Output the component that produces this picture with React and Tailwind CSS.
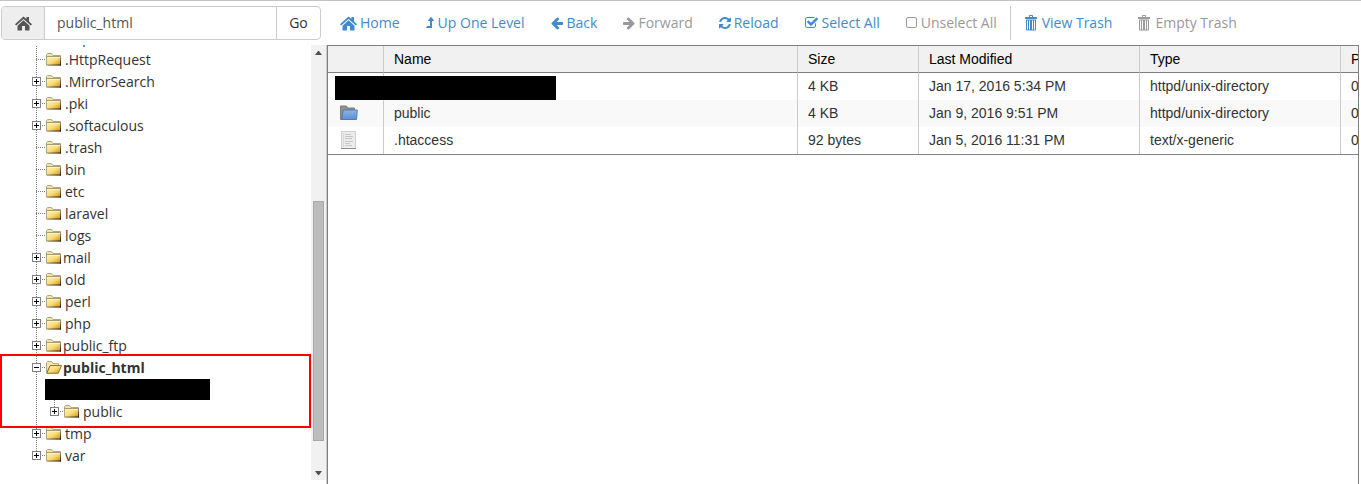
const BLUE = "text-[#428bca]";
const GRAY = "text-[#999999]";

function Icon({ className, viewBox, children }) {
  return (
    <svg
      className={"shrink-0 fill-current " + className}
      viewBox={viewBox}
      preserveAspectRatio="xMinYMid meet"
      aria-hidden="true"
    >
      {children}
    </svg>
  );
}

const HomeIcon = () => (
  <Icon className="h-[15px] w-[17px]" viewBox="0 0 17 15">
    <path d="M8.5 .4 11.400 3.100V1H14V5.500L17 8.300 15.800 9.600 8.500 3.100 1.200 9.600 0 8.300Z" />
    <path d="M8.500 4.300 14.500 9.700V14.500H10V10H7V14.500H2.500V9.700Z" />
  </Icon>
);
const LevelUpIcon = () => (
  <Icon className="h-[14px] w-[9px]" viewBox="0 0 1024 1792">
    <path
      transform="matrix(1 0 0 -1 0 1536)"
      d="M1018 933q-18 -37 -58 -37h-192v-864q0 -14 -9 -23t-23 -9h-704q-21 0 -29 18q-8 20 4 35l160 192q9 11 25 11h320v640h-192q-40 0 -58 37q-17 37 9 68l320 384q18 22 49 22t49 -22l320 -384q27 -32 9 -68z"
    />
  </Icon>
);
const ArrowLeftIcon = () => (
  <Icon className="h-[14px] w-[13px]" viewBox="0 0 1536 1792">
    <path d="M1536 896v128q0 53-32.500 90.500t-84.500 37.500h-704l293 294q38 36 38 90t-38 90l-75 76q-37 37-90 37-52 0-91-37l-651-652q-37-37-37-90 0-52 37-91l651-650q38-38 91-38 52 0 90 38l75 74q38 38 38 91t-38 91l-293 293h704q52 0 84.500 37.500t32.500 90.500z" />
  </Icon>
);
const ArrowRightIcon = () => (
  <Icon className="h-[14px] w-[12px]" viewBox="0 0 1536 1792">
    <path d="M1472 960q0 54-37 91l-651 651q-39 37-91 37-51 0-90-37l-75-75q-38-38-38-91t38-91l293-293h-704q-52 0-84.500-37.500t-32.500-90.500v-128q0-53 32.500-90.500t84.500-37.500h704l-293-294q-38-36-38-90t38-90l75-75q38-38 90-38 53 0 91 38l651 651q37 35 37 90z" />
  </Icon>
);
const ReloadIcon = () => (
  <Icon className="h-[14px] w-[12px]" viewBox="0 0 1536 1792">
    <path d="M1511 1056q0 5-1 7-64 268-268 434.500t-478 166.500q-146 0-282.500-55t-243.500-157l-129 129q-19 19-45 19t-45-19-19-45v-448q0-26 19-45t45-19h448q26 0 45 19t19 45-19 45l-137 137q71 66 161 102t187 36q134 0 250-65t186-179q11-17 53-117 8-23 30-23h192q13 0 22.500 9.500t9.500 22.500zm25-800v448q0 26-19 45t-45 19h-448q-26 0-45-19t-19-45 19-45l138-138q-148-137-349-137-134 0-250 65t-186 179q-11 17-53 117-8 23-30 23h-199q-13 0-22.500-9.500t-9.500-22.500v-7q65-268 270-434.500t480-166.500q146 0 284 55.500t245 156.500l130-129q19-19 45-19t45 19 19 45z" />
  </Icon>
);
const CheckIcon = () => (
  <Icon className="h-[14px] w-[14px]" viewBox="0 0 1664 1792">
    <path d="M1408 930v318q0 119-84.500 203.500t-203.500 84.500h-832q-119 0-203.500-84.500t-84.500-203.500v-832q0-119 84.500-203.500t203.500-84.500h832q63 0 117 25 15 7 18 23 3 17-9 29l-49 49q-10 10-23 10-3 0-9-2-23-6-45-6h-832q-66 0-113 47t-47 113v832q0 66 47 113t113 47h832q66 0 113-47t47-113v-254q0-13 9-22l64-64q10-10 23-10 6 0 12 3 20 8 20 29zm231-489l-814 814q-24 24-57 24t-57-24l-430-430q-24-24-24-57t24-57l110-110q24-24 57-24t57 24l263 263 647-647q24-24 57-24t57 24l110 110q24 24 24 57t-24 57z" />
  </Icon>
);
const SquareIcon = () => (
  <Icon className="h-[14px] w-[12px]" viewBox="0 0 1408 1792">
    <path d="M1120 256h-832q-66 0-113 47t-47 113v832q0 66 47 113t113 47h832q66 0 113-47t47-113v-832q0-66-47-113t-113-47zm288 160v832q0 119-84.500 203.500t-203.500 84.500h-832q-119 0-203.500-84.500t-84.500-203.500v-832q0-119 84.500-203.500t203.500-84.500h832q119 0 203.500 84.500t84.500 203.500z" />
  </Icon>
);
const TrashIcon = () => (
  <Icon className="h-4 w-[14px]" viewBox="0 0 12 16">
    <path fillRule="evenodd" d="M4 2V.8Q4 0 4.800 0H7.200Q8 0 8 .8V2H11.200Q12 2 12 2.800V4H0V2.800Q0 2 .8 2ZM5 2H7V1H5Z" />
    <path
      fillRule="evenodd"
      d="M1 5H11V14.500Q11 15.500 10 15.500H2Q1 15.500 1 14.500ZM2 5V14.500H3V5ZM4 5V14.500H5V5ZM7 5V14.500H8V5ZM9 5V14.500H10V5Z"
    />
    <path d="M1 4.500H11V5.500H1Z" />
  </Icon>
);

const actions = [
  { label: "Home", icon: HomeIcon },
  { label: "Up One Level", icon: LevelUpIcon },
  { label: "Back", icon: ArrowLeftIcon },
  { label: "Forward", icon: ArrowRightIcon, disabled: true },
  { label: "Reload", icon: ReloadIcon },
  { label: "Select All", icon: CheckIcon },
  { label: "Unselect All", icon: SquareIcon, disabled: true },
];
const trashActions = [
  { label: "View Trash", icon: TrashIcon },
  { label: "Empty Trash", icon: TrashIcon, disabled: true },
];

function ToolButton({ label, icon: Glyph, disabled }) {
  return (
    <button
      type="button"
      disabled={disabled}
      className={"flex h-[34px] items-center gap-[3px] px-[13px] whitespace-nowrap " + (disabled ? GRAY : BLUE)}
    >
      <Glyph />
      {label}
    </button>
  );
}

function Branch({ kind, last }) {
  const box = kind === "plus" || kind === "minus";
  return (
    <svg className="h-[22px] w-[18px] shrink-0" viewBox="0 0 18 22" shapeRendering="crispEdges" aria-hidden="true">
      <path d={last ? "M8.500 0V11" : "M8.500 0V22"} stroke="#808080" strokeDasharray="1 1" />
      {kind !== "stem" && (
        <path d={box ? "M14 11.500H18" : "M8 11.500H18"} stroke="#808080" strokeDasharray="1 1" />
      )}
      {box && (
        <>
          <rect x="4.500" y="7.500" width="8" height="8" fill="#fff" stroke="#808080" />
          <path d="M6 11.500H11" stroke="#000" />
          {kind === "plus" && <path d="M8.500 9V14" stroke="#000" />}
        </>
      )}
    </svg>
  );
}

function FolderClosed() {
  return (
    <svg className="h-[13px] w-4 shrink-0" viewBox="0 0 16 13" aria-hidden="true">
      <path d="M.5 12V1.500L1.500.500H5.500L7 2.500H14.500V12Z" fill="#f3e6a4" stroke="#b3a67c" />
      <path d="M1 4H14V12H1Z" fill="url(#folder-gold)" />
      <path d="M.5 3.500H14.500" stroke="#a8997a" />
      <path d="M1 4.500H14" stroke="#fff3b8" />
      <path d="M14.500 3V12.500" stroke="url(#folder-edge-v)" />
      <path d="M.5 12H15" stroke="url(#folder-edge-h)" />
    </svg>
  );
}

function FolderOpen() {
  return (
    <svg className="h-[13px] w-4 shrink-0" viewBox="0 0 16 13" aria-hidden="true">
      <path d="M.5 12V1.500L1.500.500H5.500L7 2.500H12.500V5H4L.500 12Z" fill="#f7e9a5" stroke="#b3a67c" />
      <path d="M.8 12.300 4.200 4.500H15.500L12.200 12.300Z" fill="url(#folder-gold)" stroke="#94712a" />
    </svg>
  );
}

const nodes = [
  { name: ".htpasswds", kind: "leaf" },
  { name: ".HttpRequest", kind: "leaf" },
  { name: ".MirrorSearch", kind: "plus" },
  { name: ".pki", kind: "plus" },
  { name: ".softaculous", kind: "plus" },
  { name: ".trash", kind: "leaf" },
  { name: "bin", kind: "leaf" },
  { name: "etc", kind: "leaf" },
  { name: "laravel", kind: "leaf" },
  { name: "logs", kind: "leaf" },
  { name: "mail", kind: "plus", tight: true },
  { name: "old", kind: "plus" },
  { name: "perl", kind: "plus" },
  { name: "php", kind: "plus" },
  { name: "public_ftp", kind: "plus", tight: true },
  { name: "public_html", kind: "minus", tight: true, open: true },
  { name: "tmp", kind: "plus" },
  { name: "var", kind: "plus", last: true },
];

function NodeRow({ node }) {
  return (
    <div className="flex h-[22px]">
      <Branch kind={node.kind} last={node.last} />
      <a href="#" className="flex items-start">
        <span className="flex pt-[5px]">{node.open ? <FolderOpen /> : <FolderClosed />}</span>
        <span className={"leading-[23px] " + (node.tight ? "pl-px " : "pl-[3px] ") + (node.open ? "font-bold" : "")}>
          {node.name}
        </span>
      </a>
    </div>
  );
}

function Tree() {
  return (
    <ul className="-mt-[19px]">
      {nodes.map((node) =>
        node.open ? (
          <li key={node.name} className="relative">
            <div className="pl-7">
              <NodeRow node={node} />
            </div>
            <ul>
              <li className="flex h-[22px] pl-7">
                <Branch kind="stem" />
              </li>
              <li className="flex pl-7">
                <Branch kind="stem" />
                <NodeRow node={{ name: "public", kind: "plus", last: true }} />
              </li>
            </ul>
            <div className="absolute top-[23px] left-[45px] h-[21px] w-[165px] bg-black" />
            <div className="pointer-events-none absolute inset-x-0 -top-0.5 -bottom-1.5 z-10 border-2 border-[#ff0000]" />
          </li>
        ) : (
          <li key={node.name} className="pl-7">
            <NodeRow node={node} />
          </li>
        )
      )}
    </ul>
  );
}

function ScrollBar() {
  return (
    <div className="flex w-[15px] shrink-0 flex-col items-center bg-[#f1f1f1]" aria-hidden="true">
      <svg className="h-[15px] w-[15px] shrink-0" viewBox="0 0 15 15">
        <path d="M4 10 7 6H8L11 10Z" fill="#505050" />
      </svg>
      <div className="grow-[142]" />
      <div className="w-[11px] grow-[239] border border-[#a8a8a8] bg-[#bcbcbc]" />
      <div className="grow-[24]" />
      <svg className="h-[15px] w-[15px] shrink-0" viewBox="0 0 15 15">
        <path d="M4 6 7 10H8L11 6Z" fill="#505050" />
      </svg>
    </div>
  );
}

function BlueFolder() {
  return (
    <svg className="h-4 w-[18px]" viewBox="0 0 18 16" aria-hidden="true">
      <path d="M.5 14.500V1H6.500L7.500 3H14.500V14.500Z" fill="#8f8f8b" stroke="#7d7d79" />
      <path d="M3 6 4.500 5H17.300L16.500 14.500H1.800Z" fill="url(#folder-blue)" stroke="#4a7dbd" />
    </svg>
  );
}

function TextFile() {
  return (
    <svg className="h-[18px] w-[18px]" viewBox="0 0 18 18" aria-hidden="true">
      <path d="M1.500.500H15.500V17.500H1.500Z" fill="#ececec" stroke="#cfcfcd" />
      <path d="M1 17.500H16" stroke="#8f8f8d" />
      <path d="M3.500 2V16" stroke="#d8d8d6" />
      <path d="M5 3.500H11M5 5.500H13M5 7.500H12M5 10.500H13M5 12.500H10M5 14.500H12" stroke="#c6c6c4" />
    </svg>
  );
}

const files = [
  { name: "", icon: null, size: "4 KB", modified: "Jan 17, 2016 5:34 PM", type: "httpd/unix-directory", perms: "0755" },
  { name: "public", icon: BlueFolder, size: "4 KB", modified: "Jan 9, 2016 9:51 PM", type: "httpd/unix-directory", perms: "0755" },
  { name: ".htaccess", icon: TextFile, size: "92 bytes", modified: "Jan 5, 2016 11:31 PM", type: "text/x-generic", perms: "0644" },
];

const CELL = "border-r border-[#cbcbcb] text-left font-normal whitespace-nowrap ";

function FileTable() {
  return (
    <table className="w-[1100px] table-fixed border-separate border-spacing-0 font-['Liberation_Sans',Arial,sans-serif] leading-5">
      <colgroup>
        <col className="w-[56px]" />
        <col className="w-[414px]" />
        <col className="w-[121px]" />
        <col className="w-[221px]" />
        <col className="w-[201px]" />
        <col />
      </colgroup>
      <thead>
        <tr className="h-[27px] bg-[#f1f1f1] text-black">
          {["", "Name", "Size", "Last Modified", "Type", "Permissions"].map((h) => (
            <th key={h} scope="col" className={CELL + "border-b border-b-[#7f7f7f] px-2.5 py-0"}>
              {h}
            </th>
          ))}
        </tr>
      </thead>
      <tbody>
        {files.map((f) => (
          <tr key={f.modified} className="h-[27px] even:bg-[#f9f9f9]">
            <td className={CELL + "pt-0 pb-px pl-3"}>
              {f.icon ? (
                <f.icon />
              ) : (
                <div className="relative h-5">
                  <div className="absolute top-0 -left-[5px] h-6 w-[221px] bg-black" />
                </div>
              )}
            </td>
            {[f.name, f.size, f.modified, f.type, f.perms].map((value, i) => (
              <td key={i} className={CELL + "px-2.5 pt-0 pb-px"}>
                {value}
              </td>
            ))}
          </tr>
        ))}
      </tbody>
    </table>
  );
}

export default function App() {
  return (
    <div className="flex h-screen flex-col overflow-hidden border-t border-[#c0c4c8] bg-white font-['Open_Sans',sans-serif] text-sm text-[#333333]">
      <svg className="absolute h-0 w-0" aria-hidden="true">
        <defs>
          <linearGradient id="folder-gold" x1="0" y1="0" x2="1" y2="1">
            <stop offset="0" stopColor="#fdf3b4" />
            <stop offset=".5" stopColor="#f8dc78" />
            <stop offset="1" stopColor="#d0901c" />
          </linearGradient>
          <linearGradient id="folder-edge-v" gradientUnits="userSpaceOnUse" x1="14" y1="3" x2="14" y2="13">
            <stop offset="0" stopColor="#a8997a" />
            <stop offset="1" stopColor="#1c1404" />
          </linearGradient>
          <linearGradient id="folder-edge-h" gradientUnits="userSpaceOnUse" x1="0" y1="12" x2="15" y2="12">
            <stop offset="0" stopColor="#a8997a" />
            <stop offset="1" stopColor="#1c1404" />
          </linearGradient>
          <linearGradient id="folder-blue" x1="0" y1="0" x2="0" y2="1">
            <stop offset="0" stopColor="#8fb6e2" />
            <stop offset="1" stopColor="#5a8fd0" />
          </linearGradient>
        </defs>
      </svg>
      <header className="flex shrink-0 pt-[5px] pb-1">
        <form className="mb-px ml-px flex h-[34px] w-80 shrink-0 overflow-hidden rounded border border-[#cccccc]">
          <label
            htmlFor="path"
            className="flex w-[43px] shrink-0 items-center justify-center border-r border-[#cccccc] bg-[#eeeeee] text-[#555555]"
          >
            <HomeIcon />
          </label>
          <input
            id="path"
            aria-label="Path"
            defaultValue="public_html"
            className="min-w-0 grow px-3 text-[#555555] outline-none"
          />
          <button type="button" className="w-11 shrink-0 border-l border-[#cccccc]">
            Go
          </button>
        </form>
        <nav className="ml-1.5 flex" aria-label="File actions">
          <div className="flex h-[34px] border-r border-[#cccccc]">
            {actions.map((a) => (
              <ToolButton key={a.label} {...a} />
            ))}
          </div>
          <div className="flex pl-px">
            {trashActions.map((a) => (
              <ToolButton key={a.label} {...a} />
            ))}
          </div>
        </nav>
      </header>
      <main className="flex min-h-0 grow">
        <aside className="flex w-[327px] shrink-0 border-r border-[#cbcbcb] pb-1">
          <div className="min-w-0 grow overflow-hidden">
            <Tree />
          </div>
          <ScrollBar />
        </aside>
        <section className="mr-0.5 min-w-0 grow overflow-hidden border-t border-r border-l border-[#7f7f7f]">
          <div className="border-b border-[#7f7f7f]">
            <FileTable />
          </div>
        </section>
      </main>
    </div>
  );
}
